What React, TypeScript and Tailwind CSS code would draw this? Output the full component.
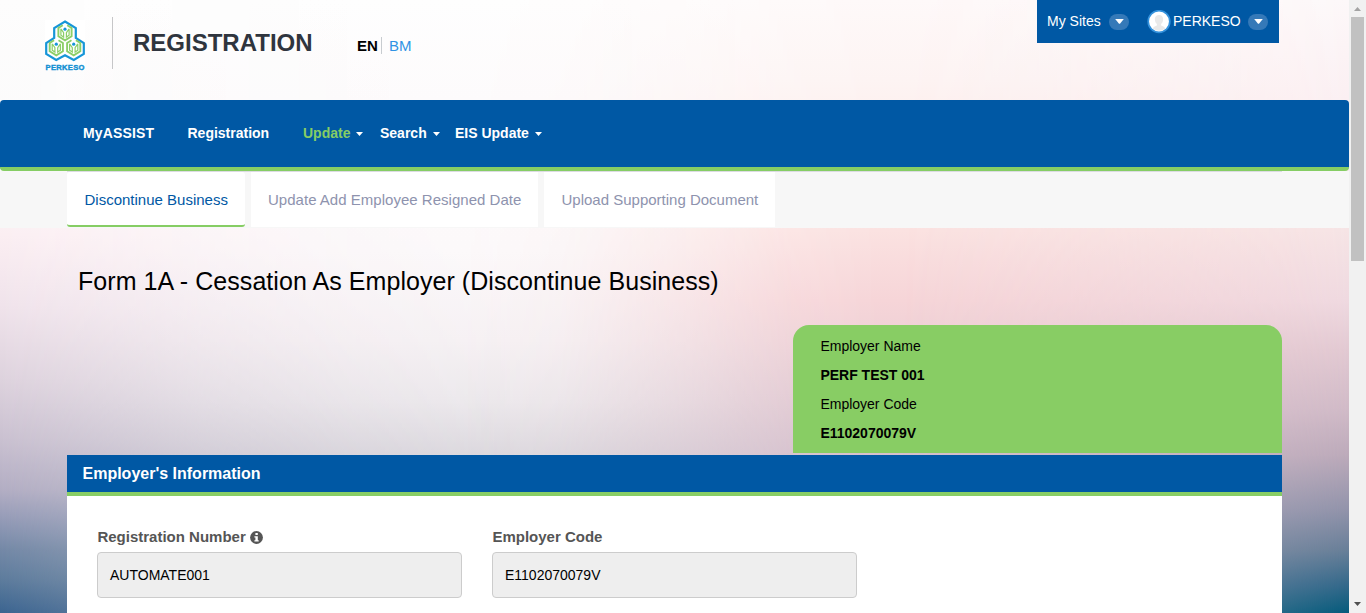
import React from "react";

function Backdrop() {
  return (
    <div className="absolute inset-0 -z-10">
      <div className="absolute inset-0 bg-[linear-gradient(to_bottom,#fefefe_0px,#fdfbfc_100px,#fcfafb_250px,#f7f3f5_340px,#eeebee_400px,#dedbe0_455px,#a0a8b8_613px)]" />
      <div className="absolute inset-0 bg-[linear-gradient(to_bottom,#fef9f9_0px,#fdf4f3_80px,#fdeae8_160px,#fbe2e1_230px,#f6d5d8_300px,#eccfd5_350px,#d6c0cd_455px,#8090a8_613px)] [mask-image:linear-gradient(to_right,transparent_460px,rgba(0,0,0,0.12)_560px,rgba(0,0,0,0.48)_680px,rgba(0,0,0,0.86)_790px,black_880px)]" />
      <div className="absolute inset-0 bg-[linear-gradient(to_bottom,#fdf8f9_0px,#fbeff2_100px,#f6e4e5_230px,#efd9e0_300px,#e2c9d2_350px,#d0bac7_410px,#bcaaba_455px,#9193aa_510px,#687f98_550px,#33688a_585px,#045a7b_613px)] [mask-image:linear-gradient(to_right,transparent_900px,rgba(0,0,0,0.75)_1282px,black_1349px)]" />
      <div className="absolute inset-0 bg-[linear-gradient(to_bottom,#fdfdfd_0px,#fbfafa_160px,#fbeef2_235px,#f0e3eb_305px,#ddd2dd_380px,#c9c0d0_440px,#b2adc3_490px,#939ab6_520px,#7388a6_550px,#5c7b9c_580px,#3b6490_613px)] [mask-image:linear-gradient(to_right,black_0px,rgba(0,0,0,0.8)_67px,rgba(0,0,0,0.42)_200px,rgba(0,0,0,0.16)_350px,transparent_520px)]" />
    </div>
  );
}

function Logo() {
  const cells = [
    [20, 12.3],
    [11.3, 27.3],
    [28.7, 27.3],
  ];
  return (
    <svg className="h-[52px] w-10 shrink-0" viewBox="0 0 40 52">
      <rect width="40" height="50" fill="#fff" />
      <path
        d="M20 1.5 30.8 8V18L38.8 23V34L28.8 40 20 35.2 11.2 40 1.2 34V23L9.2 18V8Z"
        fill="#fff"
        stroke="#1796d8"
        strokeWidth="2.2"
      />
      {cells.map(([x, y]) => (
        <g key={`${x}-${y}`} transform={`translate(${x} ${y})`} fill="none" stroke="#8ccf68">
          <path d="M-2.2-7-6.6-4.3V4L0 8 6.6 4V-4.3L2.2-7" strokeWidth="1.9" />
          <path d="M-4.1-3.5V3L-1.4 4.8V.3L-4.1-3.5M4.1-3.5V3L1.4 4.8V.3L4.1-3.5" strokeWidth="1.2" />
          <circle cy="-3.1" r="1.6" fill="#1796d8" stroke="none" />
        </g>
      ))}
      <text
        x="0.5"
        y="49.6"
        textLength="39"
        lengthAdjust="spacing"
        className="fill-[#1290d2] stroke-[#1290d2] font-['Liberation_Sans',sans-serif] text-[7.6px] font-bold [stroke-width:0.4px]"
      >
        PERKESO
      </text>
    </svg>
  );
}

function CaretPill({ className = "" }: { className?: string }) {
  return (
    <span className={`flex h-4 w-[20px] shrink-0 items-center justify-center rounded-[8px] bg-[#3579b8] ${className}`}>
      <svg className="h-[5px] w-[9px]" viewBox="0 0 9 5">
        <path d="M.2 0H8.8L5.2 4.4Q4.5 5 3.8 4.4Z" fill="#fff" />
      </svg>
    </span>
  );
}

function NavCaret() {
  return (
    <svg className="ml-[6px] h-1 w-[7px]" viewBox="0 0 7 4">
      <path d="M0 0H7L3.5 4Z" fill="#fff" />
    </svg>
  );
}

function Header() {
  return (
    <header className="flex h-[100px] shrink-0 items-start">
      <div className="flex pl-[45px] pt-5">
        <Logo />
      </div>
      <div className="ml-[27px] mt-[17px] h-[52px] w-px bg-[#c6c6c8]" />
      <h1 className="ml-5 mt-[26px] w-[224px] whitespace-nowrap text-[24px] leading-[34px] font-bold text-[#2f353e]">
        REGISTRATION
      </h1>
      <div className="mt-[37px] flex text-[15px] leading-[17px]">
        <span className="w-[25px] border-r border-[#c8ccd0] font-bold text-black">EN</span>
        <a className="pl-[7px] text-[#3093e4]">BM</a>
      </div>
      <div className="ml-auto mr-[70px] flex h-[43px] w-[242px] items-center bg-[#0058a4] pl-[10px] text-[14px] text-white">
        <span className="w-[62px] whitespace-nowrap">My Sites</span>
        <CaretPill />
        <svg className="ml-[18px] h-6 w-6 shrink-0" viewBox="0 0 24 24">
          <circle cx="12" cy="11.5" r="10.8" fill="#fff" stroke="#3391dc" strokeWidth="1.7" />
          <path
            d="M12 4.9c-3 0-4.4 2.2-4.1 5 .2 2 1 3.2 2 4.1v1.6c-1.5.7-3.3 1-4.1 2.8a9.4 9.4 0 0 0 12.4 0c-.8-1.8-2.6-2.1-4.1-2.8V14c1-.9 1.8-2.1 2-4.1.3-2.8-1.1-5-4.1-5Z"
            fill="#e9e9e9"
          />
        </svg>
        <span className="ml-[2px] w-[75px]">PERKESO</span>
        <CaretPill />
      </div>
    </header>
  );
}

function NavBar() {
  return (
    <nav className="relative z-10 flex h-[71px] shrink-0 items-center rounded-[4px] border-b-4 border-[#86cd64] bg-[#0058a4] pl-[83px] text-[14px] font-bold whitespace-nowrap text-white">
      <a className="w-[104px] tracking-[0.15px]">MyASSIST</a>
      <a className="w-[116px] pl-[0.5px]">Registration</a>
      <a className="flex w-[77px] items-center">
        <span className="text-[#86cd64]">Update</span>
        <NavCaret />
      </a>
      <a className="flex w-[75px] items-center">
        Search
        <NavCaret />
      </a>
      <a className="flex items-center">
        EIS Update
        <NavCaret />
      </a>
    </nav>
  );
}

function TabStrip() {
  return (
    <div className="flex h-[57px] shrink-0 bg-[#f7f7f7] px-[67px] text-[15px] whitespace-nowrap text-[#8e93ae]">
      <div className="flex h-14 w-full gap-[6px] border-t border-[#dcdce2]">
        <a className="flex w-[178px] items-center rounded-[3px] border-b-2 border-[#86cd64] bg-white pl-[17.5px] pt-[4px] text-[#0058a4]">
          Discontinue Business
        </a>
        <a className="flex w-[287px] items-center bg-white pl-[17px] pt-[2px] tracking-[0.02px]">
          Update Add Employee Resigned Date
        </a>
        <a className="flex w-[231px] items-center bg-white pl-[17.5px] pt-[2px]">Upload Supporting Document</a>
      </div>
    </div>
  );
}

function InfoIcon() {
  return (
    <svg className="h-[13px] w-[13px]" viewBox="0 0 13 13">
      <circle cx="6.5" cy="6.5" r="6.4" fill="#555" />
      <path d="M5.4 2H7.8V4H5.4ZM4.4 5.2H7.8V9.2H8.7V10.6H4.4V9.2H5.4V6.6H4.4Z" fill="#fff" />
    </svg>
  );
}

function Field({ label, value, info }: { label: string; value: string; info?: boolean }) {
  return (
    <div className="w-[365px]">
      <label className="flex h-[18px] items-center gap-1 pl-[0.4px] text-[15px] font-bold text-[#555]">
        {label}
        {info && <InfoIcon />}
      </label>
      <div className="mt-[6px] flex h-[46px] items-center rounded-[4px] border border-[#ccc] bg-[#eee] pl-3 text-[14px] text-black">
        {value}
      </div>
    </div>
  );
}

function Content() {
  return (
    <main className="flex flex-1 flex-col pl-[67px] pr-[67px]">
      <h2 className="h-[97px] pl-[11px] pt-[36px] text-[25px] leading-[34px] tracking-[0.055px] whitespace-nowrap text-black">
        Form 1A - Cessation As Employer (Discontinue Business)
      </h2>
      <div className="h-[128px] w-[489px] self-end rounded-t-[16px] bg-[#88cd64] pl-[27.4px] pt-[7px] text-[14px] leading-[29px] text-black">
        <p>Employer Name</p>
        <p className="font-bold">PERF TEST 001</p>
        <p>Employer Code</p>
        <p className="font-bold">E1102070079V</p>
      </div>
      <section className="mt-[2px] flex-1 bg-white">
        <h3 className="h-[41px] border-b-4 border-[#88cd64] bg-[#0058a4] pl-[15.5px] text-[16px] leading-[37px] font-bold text-white">
          Employer&apos;s Information
        </h3>
        <div className="flex gap-[30px] pl-[30px] pt-8">
          <Field label="Registration Number" value="AUTOMATE001" info />
          <Field label="Employer Code" value="E1102070079V" />
        </div>
      </section>
    </main>
  );
}

function Scrollbar() {
  return (
    <div className="flex w-[17px] flex-col items-center bg-[#f1f1f1]">
      <svg className="h-[17px] w-[17px]" viewBox="0 0 17 17">
        <path d="M5 11H12L8.5 7Z" fill="#a3a3a3" />
      </svg>
      <div className="h-[244px] w-[13px] bg-[#c1c1c1]" />
      <svg className="mt-auto h-[17px] w-[17px]" viewBox="0 0 17 17">
        <path d="M5 6H12L8.5 10Z" fill="#505050" />
      </svg>
    </div>
  );
}

export default function App() {
  return (
    <div className="flex h-[613px] w-[1366px] overflow-hidden font-['Liberation_Sans',Arial,sans-serif]">
      <div className="relative isolate flex w-[1349px] flex-col overflow-hidden">
        <Backdrop />
        <Header />
        <NavBar />
        <TabStrip />
        <Content />
      </div>
      <Scrollbar />
    </div>
  );
}
